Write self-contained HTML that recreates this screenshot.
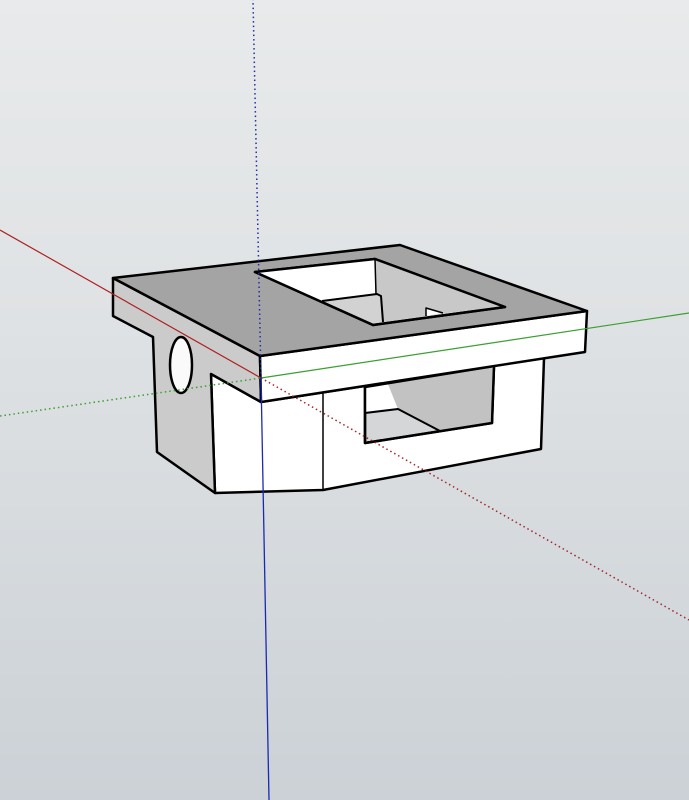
<!DOCTYPE html>
<html><head><meta charset="utf-8"><style>
html,body{margin:0;padding:0;width:689px;height:800px;overflow:hidden}
body{background:linear-gradient(#e8eaeb 0%,#dfe2e4 40%,#cbd1d6 100%)}
svg{position:absolute;left:0;top:0}
</style></head><body>
<svg width="689" height="800" viewBox="0 0 689 800">
<g stroke="#000" stroke-width="2.5" stroke-linejoin="round">
<!-- front lower -->
<polygon points="211,374 261,402 544,358 541,449 323,490 215,493" fill="#ffffff"/>
<!-- window -->
<polygon points="365,387 494,366 492,423 365,443" fill="#d4d6d8"/>
<polygon points="365,387 388,384 398,409 365,413" fill="#ffffff" stroke="none"/>
<polygon points="388,384 494,366 492,423 440,431 398,409" fill="#c2c2c2" stroke="none"/>
<polyline points="365,413 398,409 440,431" fill="none" stroke-width="2"/>
<polygon points="365,387 494,366 492,423 365,443" fill="none"/>
<line x1="323" y1="392" x2="323" y2="490" stroke-width="1.5"/>
<!-- left side face (slab + lower) -->
<polygon points="113,278 260,356 261,402 211,374 215,493 157,452 153,337 113,316" fill="#cbcbcb"/>
<line x1="113" y1="316" x2="153" y2="337" stroke-width="2"/>
<!-- circle hole -->
<ellipse cx="181" cy="365" rx="11" ry="28" fill="#fafafa"/>
<!-- slab front face -->
<polygon points="260,356 587,311 585,352 261,402" fill="#ffffff"/>
<!-- top -->
<polygon points="113,278 400,245 587,311 260,356" fill="#a4a4a4"/>
<!-- hole -->
<polygon points="255,272 375,259 505,307 373,325" fill="#d2d2d2"/>
<polygon points="255,272 375,259 376,294 322,301" fill="#ffffff" stroke="none"/>
<polygon points="375,259 505,307 443,313 426,309 426,316 383,322 381,294 375,293" fill="#c8c8c8" stroke="none"/>
<polygon points="426,309 443,313 426,316" fill="#ffffff" stroke="none"/>
<polyline points="322,301 377,294 381,296 383,322" fill="none" stroke-width="2"/>
<polyline points="375,259 376,294" fill="none" stroke-width="1.5"/>
<polyline points="426,316 426,308 443,313" fill="none" stroke-width="1.5"/>
<polygon points="255,272 375,259 505,307 373,325" fill="none"/>
</g>
<!-- axes -->
<line x1="0" y1="230" x2="261" y2="378" stroke="#b02020" stroke-width="1.2"/>
<line x1="261" y1="378" x2="689" y2="313" stroke="#3aa030" stroke-width="1.2"/>
<line x1="0" y1="416" x2="261" y2="378" stroke="#3aa030" stroke-width="1.5" stroke-dasharray="1.5,3"/>
<line x1="261" y1="378" x2="689" y2="620" stroke="#a02828" stroke-width="1.5" stroke-dasharray="1.5,3"/>
<line x1="261" y1="378" x2="253" y2="0" stroke="#2030a0" stroke-width="1.5" stroke-dasharray="1.5,3"/>
<line x1="261" y1="378" x2="269" y2="800" stroke="#1a2ab0" stroke-width="1.3"/>
</svg>
</body></html>
